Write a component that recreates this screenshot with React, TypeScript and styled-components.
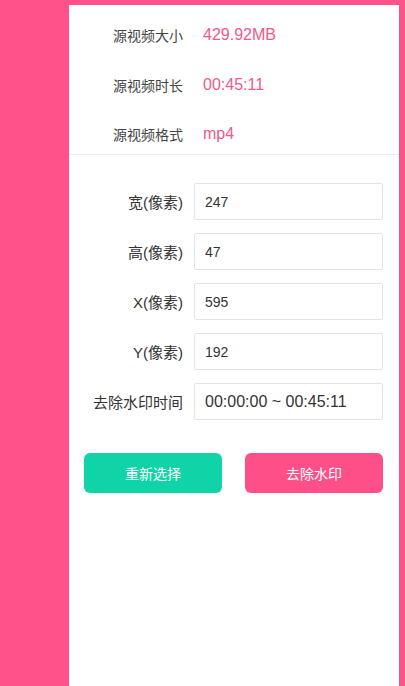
import styled, { createGlobalStyle } from "styled-components";

const GlobalStyle = createGlobalStyle`
  html, body {
    margin: 0;
    padding: 0;
    background-color: #ff528a;
    font-family: "Liberation Sans", "Noto Sans CJK SC", sans-serif;
  }
  * {
    box-sizing: border-box;
  }
`;

const Page = styled.div`
  display: flex;
  min-height: 686px;
  padding: 5px 6px 0 69px;
`;

const Panel = styled.div`
  flex: 1;
  min-width: 0;
  background-color: #fff;
  display: flex;
  flex-direction: column;
`;

const InfoList = styled.div`
  display: flex;
  flex-direction: column;
  gap: 9.5px;
  padding-top: 10px;
  border-bottom: 1px solid #eeeeee;
`;

const InfoRow = styled.div`
  display: flex;
  align-items: center;
  height: 40px;
`;

const InfoLabel = styled.span`
  width: 114px;
  text-align: right;
  font-size: 14px;
  color: #444;
`;

const InfoValue = styled.span`
  margin-left: 20px;
  font-size: 16px;
  color: #f2588b;
`;

const Form = styled.div`
  display: flex;
  flex-direction: column;
  gap: 13px;
  padding: 28px 16px 0 0;
`;

const FieldRow = styled.label`
  display: flex;
  align-items: center;
`;

const FieldLabel = styled.span`
  width: 114px;
  flex-shrink: 0;
  text-align: right;
  font-size: 15px;
  color: #333;
`;

const Field = styled.input<{ $large?: boolean }>`
  flex: 1;
  min-width: 0;
  width: 0;
  margin-left: 11px;
  height: 37px;
  padding: 0 10px;
  border: 1px solid #e3e3e3;
  border-radius: 2px;
  outline: none;
  font-family: inherit;
  font-size: ${(p) => (p.$large ? "16px" : "14px")};
  color: #333;
  background: #fff;
`;

const Actions = styled.div`
  display: flex;
  gap: 23px;
  padding: 33px 16px 0 15px;
`;

const Button = styled.button<{ $variant: "green" | "pink" }>`
  flex: 1;
  min-width: 0;
  height: 40px;
  border: none;
  border-radius: 6px;
  font-family: inherit;
  font-size: 14px;
  color: #fff;
  cursor: pointer;
  background-color: ${(p) => (p.$variant === "green" ? "#10d4a7" : "#ff4f88")};
`;

const info = [
  { label: "源视频大小", value: "429.92MB" },
  { label: "源视频时长", value: "00:45:11" },
  { label: "源视频格式", value: "mp4" },
];

const fields = [
  { label: "宽(像素)", value: "247" },
  { label: "高(像素)", value: "47" },
  { label: "X(像素)", value: "595" },
  { label: "Y(像素)", value: "192" },
  { label: "去除水印时间", value: "00:00:00 ~ 00:45:11", large: true },
];

export default function App() {
  return (
    <>
      <GlobalStyle />
      <Page>
        <Panel>
          <InfoList>
            {info.map((item) => (
              <InfoRow key={item.label}>
                <InfoLabel>{item.label}</InfoLabel>
                <InfoValue>{item.value}</InfoValue>
              </InfoRow>
            ))}
          </InfoList>
          <Form>
            {fields.map((f) => (
              <FieldRow key={f.label}>
                <FieldLabel>{f.label}</FieldLabel>
                <Field defaultValue={f.value} $large={f.large} />
              </FieldRow>
            ))}
          </Form>
          <Actions>
            <Button $variant="green">重新选择</Button>
            <Button $variant="pink">去除水印</Button>
          </Actions>
        </Panel>
      </Page>
    </>
  );
}
